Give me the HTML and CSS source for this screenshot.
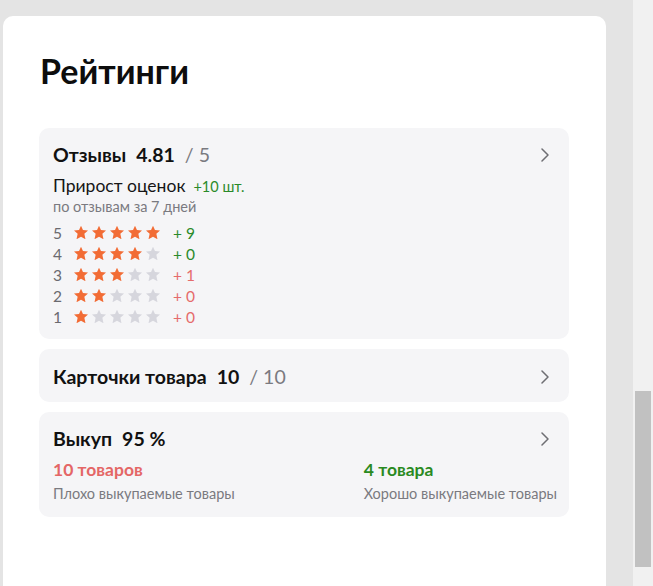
FILE: index.html
```html
<!DOCTYPE html>
<html lang="ru">
<head>
<meta charset="utf-8">
<link rel="stylesheet" href="styles.css">
</head>
<body>
<div class="page">
  <main class="main">
    <section class="card">
      <h1 class="title">Рейтинги</h1>
      <div class="panels">
        <div class="panel panel-reviews">
          <div class="head">
            <div class="head-text"><span class="name">Отзывы</span><span class="value">4.81</span><span class="max">/ 5</span></div>
            <svg class="chev" width="8" height="14" viewBox="0 0 8 14"><path d="M1 1 L7 7 L1 13" fill="none" stroke="#6e6e73" stroke-width="1.5" stroke-linecap="round" stroke-linejoin="round"/></svg>
          </div>
          <div class="growth"><span class="growth-label">Прирост оценок</span><span class="growth-val">+10 шт.</span></div>
          <div class="sub">по отзывам за 7 дней</div>
          <div class="rows">
            <div class="row"><span class="num">5</span><span class="stars"><i class="on"></i><i class="on"></i><i class="on"></i><i class="on"></i><i class="on"></i></span><span class="delta good">+ 9</span></div>
            <div class="row"><span class="num">4</span><span class="stars"><i class="on"></i><i class="on"></i><i class="on"></i><i class="on"></i><i></i></span><span class="delta good">+ 0</span></div>
            <div class="row"><span class="num">3</span><span class="stars"><i class="on"></i><i class="on"></i><i class="on"></i><i></i><i></i></span><span class="delta bad">+ 1</span></div>
            <div class="row"><span class="num">2</span><span class="stars"><i class="on"></i><i class="on"></i><i></i><i></i><i></i></span><span class="delta bad">+ 0</span></div>
            <div class="row"><span class="num">1</span><span class="stars"><i class="on"></i><i></i><i></i><i></i><i></i></span><span class="delta bad">+ 0</span></div>
          </div>
        </div>
        <div class="panel panel-cards">
          <div class="head">
            <div class="head-text"><span class="name">Карточки товара</span><span class="value">10</span><span class="max">/ 10</span></div>
            <svg class="chev" width="8" height="14" viewBox="0 0 8 14"><path d="M1 1 L7 7 L1 13" fill="none" stroke="#6e6e73" stroke-width="1.5" stroke-linecap="round" stroke-linejoin="round"/></svg>
          </div>
        </div>
        <div class="panel panel-buyout">
          <div class="head">
            <div class="head-text"><span class="name">Выкуп</span><span class="value">95 %</span></div>
            <svg class="chev" width="8" height="14" viewBox="0 0 8 14"><path d="M1 1 L7 7 L1 13" fill="none" stroke="#6e6e73" stroke-width="1.5" stroke-linecap="round" stroke-linejoin="round"/></svg>
          </div>
          <div class="buyout">
            <div class="col">
              <div class="count bad">10 товаров</div>
              <div class="desc">Плохо выкупаемые товары</div>
            </div>
            <div class="col">
              <div class="count good">4 товара</div>
              <div class="desc">Хорошо выкупаемые товары</div>
            </div>
          </div>
        </div>
      </div>
    </section>
  </main>
  <div class="scrollbar"><div class="thumb"></div></div>
</div>
</body>
</html>
```

FILE: styles.css
```css
* { box-sizing: border-box; }
html, body { margin: 0; height: 100%; }
body {
  background: #e4e4e4;
  font-family: Lato, "Noto Sans", sans-serif;
  color: #111;
  overflow: hidden;
}
.page {
  display: flex;
  height: 586px;
}
.main {
  width: 633px;
  padding: 16px 27px 0 3px;
}
.card {
  background: #fff;
  border-radius: 10px 10px 0 0;
  height: 100%;
  padding: 35px 37px 0 36px;
}
.title {
  margin: 0 0 0 1px;
  font-size: 34px;
  font-weight: 700;
  line-height: 40px;
  color: #0d0d0d;
}
.panels {
  margin-top: 37px;
  display: flex;
  flex-direction: column;
  gap: 10px;
}
.panel {
  background: #f5f5f7;
  border-radius: 10px;
  padding: 14px 20px 13px 14px;
}
.head {
  display: flex;
  align-items: center;
  justify-content: space-between;
  height: 26px;
}
.head-text {
  font-size: 19.5px;
  line-height: 26px;
  display: flex;
  align-items: baseline;
}
.name { font-weight: 700; color: #111; }
.value { font-weight: 700; margin-left: 10px; color: #111; }
.max { margin-left: 10px; color: #7a7a80; }
.chev { display: block; }
.growth {
  margin-top: 7px;
  display: flex;
  align-items: baseline;
  font-size: 17.5px;
  line-height: 22px;
  color: #161616;
}
.growth-val {
  margin-left: 8px;
  font-size: 14.5px;
  color: #2a8a2a;
}
.sub {
  font-size: 14.5px;
  line-height: 18px;
  color: #7a7a80;
}
.rows {
  margin-top: 6px;
  display: flex;
  flex-direction: column;
}
.row {
  display: flex;
  align-items: center;
  height: 21px;
  font-size: 15.5px;
  color: #6a6a6f;
}
.num { width: 21px; }
.stars { display: flex; gap: 4px; }
.stars i {
  display: block;
  width: 14px;
  height: 13.5px;
  background: #d6d6dd;
  clip-path: polygon(50% 0%, 64% 31%, 100% 36%, 74% 60%, 82% 100%, 50% 81%, 18% 100%, 26% 60%, 0% 36%, 36% 31%);
}
.stars i.on { background: #f26c35; }
.delta { margin-left: 13px; }
.good { color: #2a8a2a; }
.bad { color: #e56b6b; }
.panel-reviews { padding-bottom: 12px; }
.panel-cards { padding-top: 15px; padding-bottom: 12px; }
.panel-buyout { padding-bottom: 13px; }
.buyout {
  display: flex;
  justify-content: space-between;
  margin-top: 7px;
  margin-right: -8px;
}
.count {
  font-size: 17.5px;
  font-weight: 700;
  line-height: 22px;
}
.count.bad { color: #e46666; }
.count.good { color: #2a8a1f; }
.desc {
  margin-top: 3px;
  font-size: 14.5px;
  line-height: 20px;
  color: #7a7a80;
}
.scrollbar {
  width: 20px;
  background: #f1f1f1;
  padding: 391px 2px 0 2px;
}
.thumb {
  height: 176px;
  background: #c1c1c1;
}
```
